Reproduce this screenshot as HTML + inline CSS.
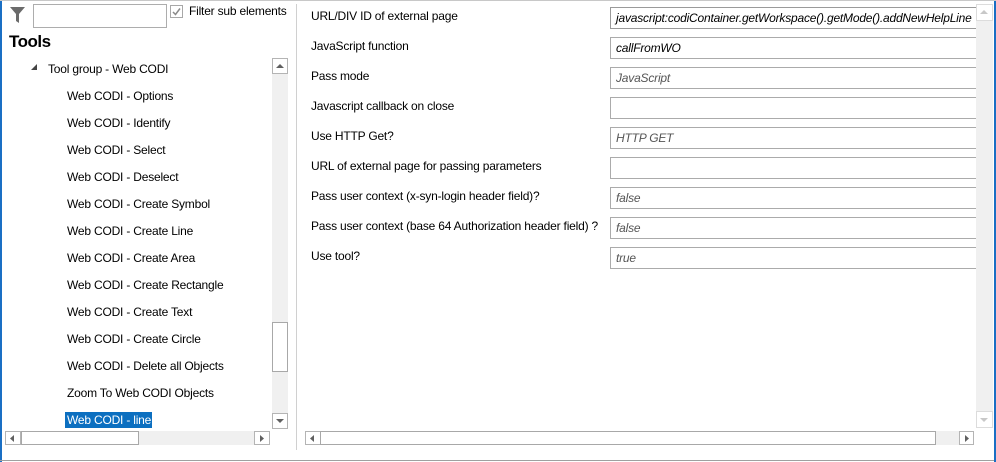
<!DOCTYPE html>
<html><head><meta charset="utf-8"><style>
*{box-sizing:border-box;margin:0;padding:0}
body{width:996px;height:462px;background:#fff;font-family:"Liberation Sans",sans-serif;font-size:12px;letter-spacing:-0.2px;color:#000;position:relative;overflow:hidden;white-space:nowrap}
.a{position:absolute}
.lbl{position:absolute;left:311px;font-size:12px;color:#000}
.fld{position:absolute;left:610px;width:367px;height:22px;border:1px solid #ababab;border-right:none;font-style:italic;padding:3px 0 0 5px;white-space:nowrap;overflow:hidden}
.item{position:absolute;left:67px;font-size:12px}
.sbtn{position:absolute;width:16px;height:16px;border:1px solid #b4b4b4;background:#fff}
</style></head><body>
<div class="a" style="left:0;top:0;width:2px;height:462px;background:#1a6fc4"></div>
<div class="a" style="right:0;top:0;width:2px;height:462px;background:#1a6fc4"></div>
<div class="a" style="left:0;top:0;width:996px;height:1px;background:#c8c8c8"></div>
<div class="a" style="left:0;top:460px;width:994px;height:1px;background:#a0a0a0"></div>

<svg class="a" style="left:10px;top:7px" width="15" height="17"><path d="M0 0H15L9 7V16L6 14V7Z" fill="#6b6b6b"/></svg>
<div class="a" style="left:33px;top:4px;width:134px;height:24px;border:1px solid #adadad"></div>
<div class="a" style="left:170px;top:5px;width:13px;height:13px;border:1px solid #a8a8a8"></div>
<svg class="a" style="left:171px;top:6px" width="11" height="11"><path d="M2 6L4.5 8.5L9 2.5" stroke="#8a8a8a" stroke-width="1.5" fill="none"/></svg>
<div class="a" style="left:189px;top:4px">Filter sub elements</div>
<div class="a" style="left:9px;top:32px;font-size:17px;font-weight:bold;letter-spacing:-0.5px">Tools</div>

<svg class="a" style="left:31px;top:64px" width="7" height="7"><path d="M6 0V6H0Z" fill="#444"/></svg>
<div class="a" style="left:48px;top:62px">Tool group - Web CODI</div>
<div class="item" style="top:89px">Web CODI - Options</div>
<div class="item" style="top:116px">Web CODI - Identify</div>
<div class="item" style="top:143px">Web CODI - Select</div>
<div class="item" style="top:170px">Web CODI - Deselect</div>
<div class="item" style="top:197px">Web CODI - Create Symbol</div>
<div class="item" style="top:224px">Web CODI - Create Line</div>
<div class="item" style="top:251px">Web CODI - Create Area</div>
<div class="item" style="top:278px">Web CODI - Create Rectangle</div>
<div class="item" style="top:305px">Web CODI - Create Text</div>
<div class="item" style="top:332px">Web CODI - Create Circle</div>
<div class="item" style="top:359px">Web CODI - Delete all Objects</div>
<div class="item" style="top:386px">Zoom To Web CODI Objects</div>
<div class="a" style="left:65px;top:412px;width:87px;height:16px;background:#0c6fc0;color:#fff;padding:0 0 0 2px;line-height:16px">Web CODI - line</div>

<div class="a" style="left:272px;top:58px;width:16px;height:370px;background:#f0f0f0"></div>
<div class="sbtn" style="left:272px;top:58px"></div>
<svg class="a" style="left:276px;top:64px" width="8" height="4"><path d="M0 4L4 0L8 4Z" fill="#606060"/></svg>
<div class="a" style="left:272px;top:322px;width:16px;height:50px;background:#fff;border:1px solid #a8a8a8"></div>
<div class="sbtn" style="left:272px;top:413px"></div>
<svg class="a" style="left:276px;top:419px" width="8" height="4"><path d="M0 0H8L4 4Z" fill="#606060"/></svg>
<div class="a" style="left:5px;top:431px;width:265px;height:14px;background:#f0f0f0"></div>
<div class="sbtn" style="left:5px;top:431px;width:16px;height:14px"></div>
<svg class="a" style="left:10px;top:435px" width="4" height="7"><path d="M4 0V7L0 3.5Z" fill="#606060"/></svg>
<div class="a" style="left:21px;top:431px;width:118px;height:14px;background:#fff;border:1px solid #a8a8a8"></div>
<div class="sbtn" style="left:254px;top:431px;width:16px;height:14px"></div>
<svg class="a" style="left:260px;top:435px" width="4" height="7"><path d="M0 0V7L4 3.5Z" fill="#606060"/></svg>

<div class="a" style="left:296px;top:4px;width:1px;height:446px;background:#d0d0d0"></div>

<div class="lbl" style="top:9px">URL/DIV ID of external page</div>
<div class="fld" style="top:7px;color:#000;border-color:#9a9a9a">javascript:codiContainer.getWorkspace().getMode().addNewHelpLine</div>
<div class="lbl" style="top:39px">JavaScript function</div>
<div class="fld" style="top:37px">callFromWO</div>
<div class="lbl" style="top:69px">Pass mode</div>
<div class="fld" style="top:67px;color:#555">JavaScript</div>
<div class="lbl" style="top:99px">Javascript callback on close</div>
<div class="fld" style="top:97px"></div>
<div class="lbl" style="top:129px">Use HTTP Get?</div>
<div class="fld" style="top:127px;color:#555">HTTP GET</div>
<div class="lbl" style="top:159px">URL of external page for passing parameters</div>
<div class="fld" style="top:157px"></div>
<div class="lbl" style="top:189px">Pass user context (x-syn-login header field)?</div>
<div class="fld" style="top:187px;color:#555">false</div>
<div class="lbl" style="top:219px">Pass user context (base 64 Authorization header field) ?</div>
<div class="fld" style="top:217px;color:#555">false</div>
<div class="lbl" style="top:249px">Use tool?</div>
<div class="fld" style="top:247px;color:#555">true</div>

<div class="a" style="left:976px;top:4px;width:17px;height:424px;background:#f0f0f0"></div>
<div class="sbtn" style="left:976px;top:4px;width:17px;height:17px;border-color:#dcdcdc"></div>
<svg class="a" style="left:980px;top:10px" width="8" height="4"><path d="M0 4L4 0L8 4Z" fill="#c8c8c8"/></svg>
<div class="sbtn" style="left:976px;top:411px;width:17px;height:17px;border-color:#dcdcdc"></div>
<svg class="a" style="left:980px;top:418px" width="8" height="4"><path d="M0 0H8L4 4Z" fill="#c8c8c8"/></svg>
<div class="a" style="left:305px;top:431px;width:668px;height:14px;background:#f0f0f0"></div>
<div class="sbtn" style="left:305px;top:431px;width:16px;height:14px"></div>
<svg class="a" style="left:310px;top:435px" width="4" height="7"><path d="M4 0V7L0 3.5Z" fill="#606060"/></svg>
<div class="a" style="left:320px;top:431px;width:616px;height:14px;background:#fff;border:1px solid #a8a8a8"></div>
<div class="sbtn" style="left:959px;top:431px;width:15px;height:14px"></div>
<svg class="a" style="left:965px;top:435px" width="4" height="7"><path d="M0 0V7L4 3.5Z" fill="#606060"/></svg>
</body></html>
